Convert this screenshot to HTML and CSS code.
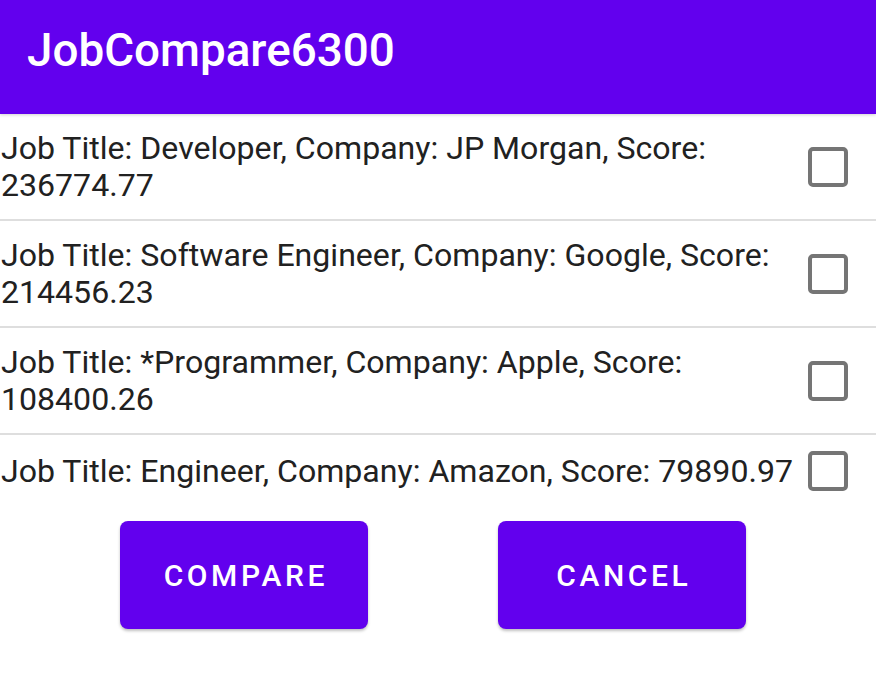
FILE: index.html
```html
<!DOCTYPE html>
<html>
<head>
<meta charset="utf-8">
<link rel="stylesheet" href="styles.css">
</head>
<body>
<header class="appbar"><h1 class="title">JobCompare6300</h1></header>
<ul class="list">
  <li class="row"><span class="label">Job Title: Developer, Company: JP Morgan, Score: 236774.77</span><span class="check"></span></li>
  <li class="row"><span class="label">Job Title: Software Engineer, Company: Google, Score: 214456.23</span><span class="check"></span></li>
  <li class="row"><span class="label">Job Title: *Programmer, Company: Apple, Score: 108400.26</span><span class="check"></span></li>
  <li class="row last"><span class="label">Job Title: Engineer, Company: Amazon, Score: 79890.97</span><span class="check"></span></li>
</ul>
<div class="actions">
  <button class="btn">COMPARE</button>
  <button class="btn">CANCEL</button>
</div>
</body>
</html>
```
FILE: styles.css
```css
* { box-sizing: border-box; }
html, body { margin: 0; padding: 0; background: #fff; }
body { font-family: Roboto, "Noto Sans", sans-serif; width: 876px; height: 693px; overflow: hidden; }
.appbar {
  background: #6200ee;
  height: 114px;
  padding: 25px 0 0 27px;
  box-shadow: 0 1px 3px rgba(0,0,0,0.18);
  position: relative;
  z-index: 1;
}
.title {
  margin: 0;
  color: #fff;
  font-size: 45.8px;
  font-weight: 500;
  line-height: 52px;
}
.list { list-style: none; margin: 0; padding: 0; }
.row {
  display: flex;
  align-items: center;
  padding: 16px 0 15px 1px;
  border-bottom: 2px solid #dedede;
}
.row.last { border-bottom: none; }
.label {
  flex: 1;
  font-size: 32.1px;
  line-height: 37px;
  color: #212121;
  padding-right: 4px;
}
.check {
  flex: none;
  width: 40px;
  height: 40px;
  margin: 0 28px 0 4px;
  border: 4px solid #757575;
  border-radius: 5px;
}
.actions {
  display: flex;
  justify-content: center;
  gap: 130px;
  padding: 15px 10px 0 0;
}
.btn {
  width: 248px;
  height: 108px;
  border: none;
  border-radius: 8px;
  background: #6200ee;
  color: #fff;
  font-family: Roboto, sans-serif;
  font-weight: 500;
  font-size: 30px;
  letter-spacing: 0.12em;
  text-indent: 0.12em;
  box-shadow: 0 2px 3px rgba(0,0,0,0.25);
}
```
